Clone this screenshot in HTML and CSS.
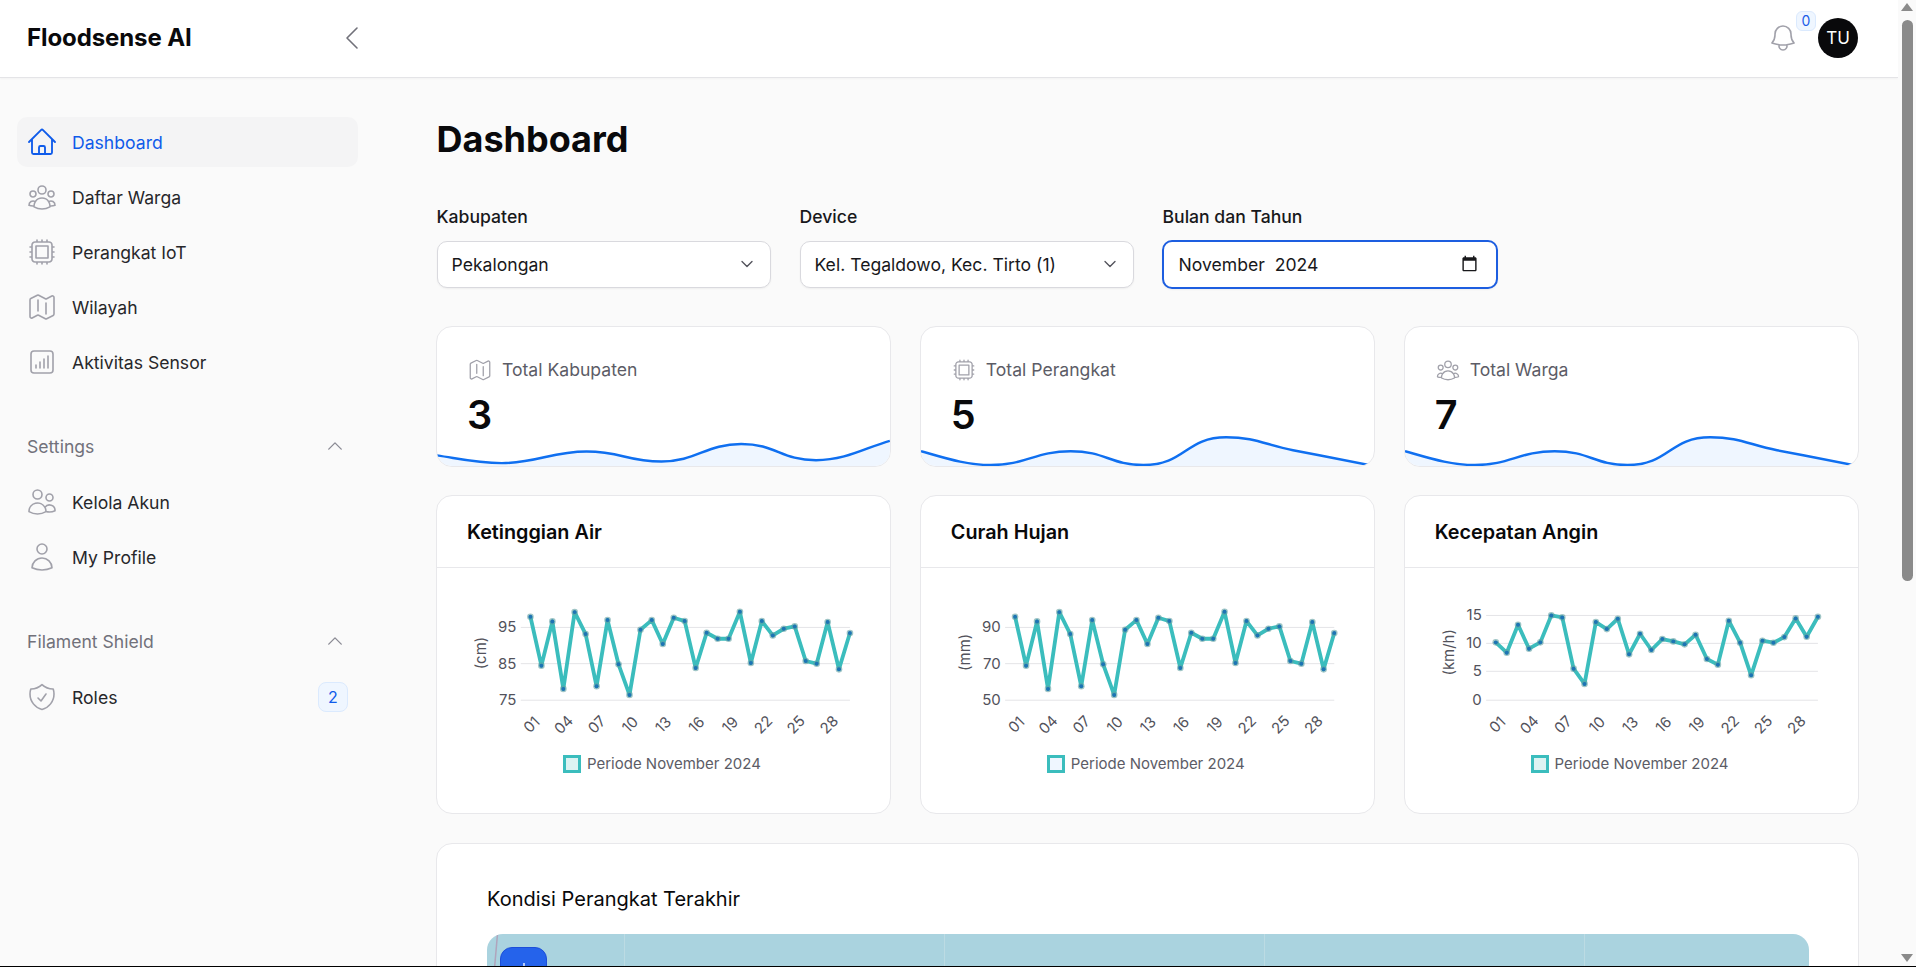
FILE: index.html
```html
<!DOCTYPE html>
<html lang="id">
<head>
<meta charset="utf-8">
<title>Floodsense AI</title>
<link rel="stylesheet" href="styles.css">
</head>
<body>
<svg class="defs" width="0" height="0">
  <defs>
    <symbol id="i-home" viewBox="0 0 24 24"><path d="m2.25 12 8.954-8.955c.44-.439 1.152-.439 1.591 0L21.75 12M4.5 9.75v10.125c0 .621.504 1.125 1.125 1.125H9.75v-4.875c0-.621.504-1.125 1.125-1.125h2.25c.621 0 1.125.504 1.125 1.125V21h4.125c.621 0 1.125-.504 1.125-1.125V9.75M8.25 21h8.25"/></symbol>
    <symbol id="i-group" viewBox="0 0 24 24"><path d="M18 18.72a9.094 9.094 0 0 0 3.741-.479 3 3 0 0 0-4.682-2.72m.94 3.198.001.031c0 .225-.012.447-.037.666A11.944 11.944 0 0 1 12 21c-2.17 0-4.207-.576-5.963-1.584A6.062 6.062 0 0 1 6 18.719m12 0a5.971 5.971 0 0 0-.941-3.197m0 0A5.995 5.995 0 0 0 12 12.75a5.995 5.995 0 0 0-5.058 2.772m0 0a3 3 0 0 0-4.681 2.72 8.986 8.986 0 0 0 3.74.477m.94-3.197a5.971 5.971 0 0 0-.94 3.197M15 6.75a3 3 0 1 1-6 0 3 3 0 0 1 6 0Zm6 3a2.25 2.25 0 1 1-4.5 0 2.25 2.25 0 0 1 4.5 0Zm-13.5 0a2.25 2.25 0 1 1-4.5 0 2.25 2.25 0 0 1 4.5 0Z"/></symbol>
    <symbol id="i-chip" viewBox="0 0 24 24"><path d="M8.25 3v1.5M4.5 8.25H3m18 0h-1.5M4.5 12H3m18 0h-1.5m-15 3.75H3m18 0h-1.5M8.25 19.5V21M12 3v1.5m0 15V21m3.75-18v1.5m0 15V21m-9-1.5h10.5a2.25 2.25 0 0 0 2.25-2.25V6.75a2.25 2.25 0 0 0-2.25-2.25H6.75A2.25 2.25 0 0 0 4.5 6.75v10.5a2.25 2.25 0 0 0 2.25 2.25Zm.75-12h9v9h-9v-9Z"/></symbol>
    <symbol id="i-map" viewBox="0 0 24 24"><path d="M9 6.75V15m6-6v8.25m.503 3.498 4.875-2.437c.381-.19.622-.58.622-1.006V4.82c0-.836-.88-1.38-1.628-1.006l-3.869 1.934c-.317.159-.69.159-1.006 0L9.503 3.252a1.125 1.125 0 0 0-1.006 0L3.622 5.689C3.24 5.88 3 6.27 3 6.695V19.18c0 .836.88 1.38 1.628 1.006l3.869-1.934c.317-.159.69-.159 1.006 0l4.994 2.497c.317.158.69.158 1.006 0Z"/></symbol>
    <symbol id="i-bars" viewBox="0 0 24 24"><path d="M7.5 14.25v2.25m3-4.5v4.5m3-6.75v6.75m3-9v9M6 20.25h12A2.25 2.25 0 0 0 20.25 18V6A2.25 2.25 0 0 0 18 3.75H6A2.25 2.25 0 0 0 3.75 6v12A2.25 2.25 0 0 0 6 20.25Z"/></symbol>
    <symbol id="i-users" viewBox="0 0 24 24"><path d="M15 19.128a9.38 9.38 0 0 0 2.625.372 9.337 9.337 0 0 0 4.121-.952 4.125 4.125 0 0 0-7.533-2.493M15 19.128v-.003c0-1.113-.285-2.16-.786-3.07M15 19.128v.106A12.318 12.318 0 0 1 8.624 21c-2.331 0-4.512-.645-6.374-1.766l-.001-.109a6.375 6.375 0 0 1 11.964-3.07M12 6.375a3.375 3.375 0 1 1-6.75 0 3.375 3.375 0 0 1 6.75 0Zm8.25 2.25a2.625 2.625 0 1 1-5.25 0 2.625 2.625 0 0 1 5.25 0Z"/></symbol>
    <symbol id="i-user" viewBox="0 0 24 24"><path d="M15.75 6a3.75 3.75 0 1 1-7.5 0 3.75 3.75 0 0 1 7.5 0ZM4.501 20.118a7.5 7.5 0 0 1 14.998 0A17.933 17.933 0 0 1 12 21.75c-2.676 0-5.216-.584-7.499-1.632Z"/></symbol>
    <symbol id="i-shield" viewBox="0 0 24 24"><path d="M9 12.75 11.25 15 15 9.75m-3-7.036A11.959 11.959 0 0 1 3.598 6 11.99 11.99 0 0 0 3 9.749c0 5.592 3.824 10.29 9 11.623 5.176-1.332 9-6.03 9-11.622 0-1.31-.21-2.571-.598-3.751h-.152c-3.196 0-6.1-1.248-8.25-3.286Z"/></symbol>
    <symbol id="i-bell" viewBox="0 0 24 24"><path d="M14.857 17.082a23.848 23.848 0 0 0 5.454-1.31A8.967 8.967 0 0 1 18 9.75V9A6 6 0 0 0 6 9v.75a8.967 8.967 0 0 1-2.312 6.022c1.733.64 3.56 1.085 5.455 1.31m5.714 0a24.255 24.255 0 0 1-5.714 0m5.714 0a3 3 0 1 1-5.714 0"/></symbol>
    <symbol id="i-up" viewBox="0 0 24 24"><path d="m4.5 15.75 7.5-7.5 7.5 7.5"/></symbol>
    <symbol id="i-down" viewBox="0 0 24 24"><path d="m19.5 8.25-7.5 7.5-7.5-7.5"/></symbol>
    <symbol id="i-left" viewBox="0 0 24 24"><path d="M15.75 19.5 8.25 12l7.5-7.5"/></symbol>
    <marker id="dot" markerUnits="userSpaceOnUse" viewBox="-12 -12 24 24" markerWidth="24" markerHeight="24" refX="0" refY="0">
      <circle r="10" fill="#5f9ea0" fill-opacity=".6"/>
      <circle r="6" fill="#1d74b4"/>
    </marker>
  </defs>
</svg>

<div class="page">
  <div class="app">
    <header class="topbar">
      <div class="brand">
        <span class="logo">Floodsense AI</span>
        <svg class="ico ico-32 ico-collapse"><use href="#i-left"/></svg>
      </div>
      <div class="top-actions">
        <div class="bell">
          <svg class="ico ico-32"><use href="#i-bell"/></svg>
          <span class="bell-badge">0</span>
        </div>
        <div class="avatar">TU</div>
      </div>
    </header>

    <div class="body-row">
      <aside class="sidebar">
        <nav class="nav-list">
          <a class="nav-item active"><svg class="ico ico-32"><use href="#i-home"/></svg><span>Dashboard</span></a>
          <a class="nav-item"><svg class="ico ico-32"><use href="#i-group"/></svg><span>Daftar Warga</span></a>
          <a class="nav-item"><svg class="ico ico-32"><use href="#i-chip"/></svg><span>Perangkat IoT</span></a>
          <a class="nav-item"><svg class="ico ico-32"><use href="#i-map"/></svg><span>Wilayah</span></a>
          <a class="nav-item"><svg class="ico ico-32"><use href="#i-bars"/></svg><span>Aktivitas Sensor</span></a>
        </nav>
        <div class="nav-group">
          <div class="group-label"><span>Settings</span><svg class="ico ico-chev"><use href="#i-up"/></svg></div>
          <nav class="nav-list">
            <a class="nav-item"><svg class="ico ico-32"><use href="#i-users"/></svg><span>Kelola Akun</span></a>
            <a class="nav-item"><svg class="ico ico-32"><use href="#i-user"/></svg><span>My Profile</span></a>
          </nav>
        </div>
        <div class="nav-group">
          <div class="group-label"><span>Filament Shield</span><svg class="ico ico-chev"><use href="#i-up"/></svg></div>
          <nav class="nav-list">
            <a class="nav-item"><svg class="ico ico-32"><use href="#i-shield"/></svg><span>Roles</span><b class="count">2</b></a>
          </nav>
        </div>
      </aside>

      <main class="main">
        <h1 class="title">Dashboard</h1>

        <section class="filters">
          <div class="field">
            <label class="field-label" for="f-kab">Kabupaten</label>
            <div class="control-wrap">
              <select id="f-kab" class="control"><option>Pekalongan</option></select>
              <svg class="ico select-chev"><use href="#i-down"/></svg>
            </div>
          </div>
          <div class="field">
            <label class="field-label" for="f-dev">Device</label>
            <div class="control-wrap">
              <select id="f-dev" class="control"><option>Kel. Tegaldowo, Kec. Tirto (1)</option></select>
              <svg class="ico select-chev"><use href="#i-down"/></svg>
            </div>
          </div>
          <div class="field">
            <label class="field-label" for="f-date">Bulan dan Tahun</label>
            <div class="control-wrap">
              <input id="f-date" class="control control-focus" type="text" value="November  2024">
              <svg class="date-icon" viewBox="0 0 24 24"><path d="M20 3h-1V1h-2v2H7V1H5v2H4c-1.1 0-2 .9-2 2v16c0 1.1.9 2 2 2h16c1.1 0 2-.9 2-2V5c0-1.1-.9-2-2-2zm0 18H4V8h16v13z"/></svg>
            </div>
          </div>
        </section>

        <section class="grid3 stats">
          <article class="card stat">
            <div class="stat-head"><svg class="ico ico-26"><use href="#i-map"/></svg><span>Total Kabupaten</span></div>
            <div class="stat-value">3</div>
            <svg class="spark" viewBox="0 0 454 32" preserveAspectRatio="none">
              <path class="spark-fill" d="M0 21C25 25 40 29 65 29C100 29 115 17 150 17C185 17 190 27.3 225 27.3C260 27.3 270 9.3 305 9.3C340 9.3 345 26 380 26C410 26 430 13 454 6V32H0Z"/>
              <path class="spark-line" d="M0 21C25 25 40 29 65 29C100 29 115 17 150 17C185 17 190 27.3 225 27.3C260 27.3 270 9.3 305 9.3C340 9.3 345 26 380 26C410 26 430 13 454 6"/>
            </svg>
          </article>
          <article class="card stat">
            <div class="stat-head"><svg class="ico ico-26"><use href="#i-chip"/></svg><span>Total Perangkat</span></div>
            <div class="stat-value">5</div>
            <svg class="spark" viewBox="0 0 454 32" preserveAspectRatio="none">
              <path class="spark-fill" d="M0 16.7C25 24 45 31 70 31C105 31 115 16.7 150 16.7C185 16.7 190 31 223 31C265 31 265 2.3 306 2.3C335 2.3 345 10 373 15.7C400 21 425 26 454 32H0Z"/>
              <path class="spark-line" d="M0 16.7C25 24 45 31 70 31C105 31 115 16.7 150 16.7C185 16.7 190 31 223 31C265 31 265 2.3 306 2.3C335 2.3 345 10 373 15.7C400 21 425 26 454 32"/>
            </svg>
          </article>
          <article class="card stat">
            <div class="stat-head"><svg class="ico ico-26"><use href="#i-group"/></svg><span>Total Warga</span></div>
            <div class="stat-value">7</div>
            <svg class="spark" viewBox="0 0 454 32" preserveAspectRatio="none">
              <path class="spark-fill" d="M0 16.7C25 24 45 31 70 31C105 31 115 16.7 150 16.7C185 16.7 190 31 223 31C265 31 265 2.3 306 2.3C335 2.3 345 10 373 15.7C400 21 425 26 454 32H0Z"/>
              <path class="spark-line" d="M0 16.7C25 24 45 31 70 31C105 31 115 16.7 150 16.7C185 16.7 190 31 223 31C265 31 265 2.3 306 2.3C335 2.3 345 10 373 15.7C400 21 425 26 454 32"/>
            </svg>
          </article>
        </section>

        <section class="grid3 charts">
          <article class="card chart-card">
            <h2 class="chart-title">Ketinggian Air</h2>
            <div class="chart-body">
              <svg class="chart" viewBox="21 -63 1362 543">
                <g class="grid"><path d="M273 115H1263M273 224H1263M273 334H1263"/></g>
                <g class="y-ticks">
                  <text x="260" y="115">95</text><text x="260" y="224">85</text><text x="260" y="334">75</text>
                </g>
                <text class="axis-title" transform="translate(153 192) rotate(-90)">(cm)</text>
                <g class="x-ticks">
                  <text transform="translate(306 408) rotate(-45)">01</text>
                  <text transform="translate(402 408) rotate(-45)">04</text>
                  <text transform="translate(502 408) rotate(-45)">07</text>
                  <text transform="translate(602 408) rotate(-45)">10</text>
                  <text transform="translate(702 408) rotate(-45)">13</text>
                  <text transform="translate(802 408) rotate(-45)">16</text>
                  <text transform="translate(903 408) rotate(-45)">19</text>
                  <text transform="translate(1003 408) rotate(-45)">22</text>
                  <text transform="translate(1101 408) rotate(-45)">25</text>
                  <text transform="translate(1201 408) rotate(-45)">28</text>
                </g>
                <polyline class="series" points="302,83 335,230 368,97 401,300 435,69 468,135 501,292 534,93 567,226 600,318 633,122 667,93 700,165 733,86 766,96 799,237 832,131 865,149 898,149 932,68 965,222 998,96 1031,139 1064,119 1097,112 1130,216 1163,224 1196,99 1230,241 1263,132"/>
              </svg>
              <div class="legend"><i class="swatch"></i><span>Periode November 2024</span></div>
            </div>
          </article>
          <article class="card chart-card">
            <h2 class="chart-title">Curah Hujan</h2>
            <div class="chart-body">
              <svg class="chart" viewBox="3 -63 1362 543">
                <g class="grid"><path d="M256 115H1246M256 224H1246M256 334H1246"/></g>
                <g class="y-ticks">
                  <text x="243" y="115">90</text><text x="243" y="224">70</text><text x="243" y="334">50</text>
                </g>
                <text class="axis-title" transform="translate(135 190) rotate(-90)">(mm)</text>
                <g class="x-ticks">
                  <text transform="translate(290 408) rotate(-45)">01</text>
                  <text transform="translate(386 408) rotate(-45)">04</text>
                  <text transform="translate(486 408) rotate(-45)">07</text>
                  <text transform="translate(586 408) rotate(-45)">10</text>
                  <text transform="translate(686 408) rotate(-45)">13</text>
                  <text transform="translate(786 408) rotate(-45)">16</text>
                  <text transform="translate(887 408) rotate(-45)">19</text>
                  <text transform="translate(984 408) rotate(-45)">22</text>
                  <text transform="translate(1085 408) rotate(-45)">25</text>
                  <text transform="translate(1184 408) rotate(-45)">28</text>
                </g>
                <polyline class="series" points="286,83 319,230 352,97 385,300 419,69 452,135 485,292 518,93 551,226 584,318 617,122 651,93 684,165 717,86 750,96 783,237 816,131 849,149 882,149 916,68 949,222 982,96 1015,139 1048,119 1081,112 1114,216 1147,224 1180,99 1214,241 1246,132"/>
              </svg>
              <div class="legend"><i class="swatch swatch-blue"></i><span>Periode November 2024</span></div>
            </div>
          </article>
          <article class="card chart-card">
            <h2 class="chart-title">Kecepatan Angin</h2>
            <div class="chart-body">
              <svg class="chart" viewBox="12 -63 1362 543">
                <g class="grid"><path d="M256 79H1254M256 163H1254M256 247H1254M256 334H1254"/></g>
                <g class="y-ticks">
                  <text x="243" y="79">15</text><text x="243" y="163">10</text><text x="243" y="247">5</text><text x="243" y="334">0</text>
                </g>
                <text class="axis-title" transform="translate(145 190) rotate(-90)">(km/h)</text>
                <g class="x-ticks">
                  <text transform="translate(290 408) rotate(-45)">01</text>
                  <text transform="translate(386 408) rotate(-45)">04</text>
                  <text transform="translate(488 408) rotate(-45)">07</text>
                  <text transform="translate(590 408) rotate(-45)">10</text>
                  <text transform="translate(690 408) rotate(-45)">13</text>
                  <text transform="translate(790 408) rotate(-45)">16</text>
                  <text transform="translate(890 408) rotate(-45)">19</text>
                  <text transform="translate(990 408) rotate(-45)">22</text>
                  <text transform="translate(1090 408) rotate(-45)">25</text>
                  <text transform="translate(1190 408) rotate(-45)">28</text>
                </g>
                <polyline class="series" points="285,160 318,191 352,107 385,179 419,160 452,79 485,85 519,239 552,285 586,99 619,120 652,89 686,196 719,134 753,183 786,150 819,157 853,166 886,137 920,210 953,227 986,95 1020,161 1053,259 1087,155 1120,161 1153,144 1187,88 1220,143 1254,83"/>
              </svg>
              <div class="legend"><i class="swatch"></i><span>Periode November 2024</span></div>
            </div>
          </article>
        </section>

        <section class="card map-card">
          <h2 class="map-title">Kondisi Perangkat Terakhir</h2>
          <div class="map">
            <svg class="map-border" width="6" height="40" viewBox="0 0 6 40"><path d="M4.5 0 1 40"/></svg>
            <button class="zoom-btn" aria-label="Zoom in"><svg width="18" height="18" viewBox="0 0 18 18"><path d="M9 1V17M1 9H17"/></svg></button>
          </div>
        </section>
      </main>
    </div>
  </div>

  <div class="scrollbar">
    <span class="sb-up"></span>
    <span class="sb-thumb"></span>
    <span class="sb-down"></span>
  </div>
</div>
</body>
</html>
```

FILE: styles.css
```css
* { box-sizing: border-box; }
html, body { margin: 0; height: 100%; overflow: hidden; }
body {
  font-family: Inter, "Liberation Sans", sans-serif;
  font-size: 16px;
  color: #18181b;
  background: #fafafa;
}
.defs { position: absolute; }

.page {
  height: 967px;
  display: flex;
  border-bottom: 1px solid #000;
  overflow: hidden;
}
.app { flex: 1; min-width: 0; display: flex; flex-direction: column; }

/* scrollbar */
.scrollbar {
  width: 18px;
  flex: none;
  display: flex;
  flex-direction: column;
  align-items: center;
  background: #fafafa;
  padding: 3px 0 4px 0;
}
.sb-up, .sb-down {
  width: 0; height: 0;
  border-left: 6px solid transparent;
  border-right: 6px solid transparent;
}
.sb-up { border-bottom: 8px solid #8a8a8a; }
.sb-down { border-top: 8px solid #8a8a8a; margin-top: auto; }
.sb-thumb {
  width: 11px;
  height: 561px;
  margin-top: 9px;
  background: #8a8a8a;
  border-radius: 6px;
}

/* top bar */
.topbar {
  height: 78px;
  flex: none;
  background: #fff;
  border-bottom: 1px solid #e4e4e7;
  box-shadow: 0 1px 2px rgba(0,0,0,.03);
  display: flex;
  align-items: center;
  justify-content: space-between;
  padding: 0 40px 2px 27px;
}
.brand { width: 341px; display: flex; align-items: center; justify-content: space-between; }
.logo { font-size: 24px; font-weight: 700; line-height: 32px; color: #09090b; letter-spacing: -.1px; }
.ico { display: block; fill: none; stroke: #a1a1aa; stroke-width: 1.2; stroke-linecap: round; stroke-linejoin: round; flex: none; }
.ico-32 { width: 32px; height: 32px; }
.ico-26 { width: 26px; height: 26px; stroke-width: 1.2; }
.ico-collapse { stroke: #71717a; }
.top-actions { display: flex; align-items: center; }
.bell { position: relative; width: 51px; height: 32px; }
.bell-badge {
  position: absolute; left: 29px; top: -11px;
  width: 20px; height: 20px;
  display: flex; align-items: center; justify-content: center;
  font-size: 14px; color: #1d5ee8;
  background: #eff6ff; border: 1px solid #dbeafe; border-radius: 6px;
}
.avatar {
  width: 40px; height: 40px; border-radius: 50%;
  background: #09090b; color: #fff;
  display: flex; align-items: center; justify-content: center;
  font-size: 17px;
}

/* body layout */
.body-row { flex: 1; min-height: 0; display: flex; }
.sidebar { width: 375px; flex: none; padding: 39px 0 0 17px; }
.nav-list { display: flex; flex-direction: column; gap: 5px; width: 341px; }
.nav-item {
  height: 50px;
  display: flex; align-items: center; gap: 14px;
  padding: 0 10px 0 9px;
  border-radius: 10px;
  font-size: 17.6px; font-weight: 400;
  color: #27272a;
}
.nav-item .count { margin-left: auto; }
.nav-item.active { background: #f4f4f5; color: #0f5bea; }
.nav-item.active .ico { stroke: #0f5bea; stroke-width: 1.4; }
.nav-group { margin-top: 47px; }
.group-label {
  height: 24px; width: 341px;
  display: flex; align-items: center; justify-content: space-between;
  padding: 0 4px 0 10px;
  font-size: 17.6px; font-weight: 400; color: #71717a;
  margin-bottom: 19px;
}
.ico-chev { width: 20px; height: 20px; stroke: #8a8a94; margin-right: 9px; stroke-width: 1.6; }
.count {
  width: 30px; height: 30px;
  display: flex; align-items: center; justify-content: center;
  font-size: 16px; font-weight: 400; color: #0f5bea;
  background: #eff6ff; border: 1px solid #dbeafe; border-radius: 8px;
}

.main { flex: 1; min-width: 0; padding: 41px 39.5px 0 61px; }
.title { margin: 0 0 0 .5px; font-size: 36px; line-height: 40px; font-weight: 700; color: #09090b; }

.filters { display: flex; gap: 29px; margin-top: 46px; padding: 0 362px 0 .5px; }
.field { flex: 1; min-width: 0; }
.field-label { display: block; font-size: 17.6px; line-height: 24px; font-weight: 500; color: #18181b; margin-bottom: 12px; }
.control-wrap { position: relative; }
.control {
  width: 100%; height: 47px;
  appearance: none;
  font: 400 17.6px Inter, "Liberation Sans", sans-serif;
  color: #18181b;
  background: #fff;
  border: 1px solid #d9d9de;
  border-radius: 10px;
  padding: 0 14px;
  box-shadow: 0 1px 2px rgba(0,0,0,.05);
  outline: none;
  display: block;
}
.control-focus { border: 2px solid #1d5ee0; padding: 0 44px 0 15px; margin: -1px; width: calc(100% + 2px); height: 49px; }
.select-chev { position: absolute; right: 16px; top: 15px; width: 16px; height: 16px; stroke: #52525b; stroke-width: 2; pointer-events: none; }
.date-icon { position: absolute; right: 19px; top: 15px; width: 17px; height: 17px; fill: #18181b; pointer-events: none; }

.grid3 { display: grid; grid-template-columns: repeat(3, 1fr); gap: 29px; }
.stats { margin-top: 38px; }
.charts { margin-top: 28px; }
.card { background: #fff; border: 1px solid #e8e8eb; border-radius: 16px; overflow: hidden; }

.stat { height: 141px; display: flex; flex-direction: column; padding-top: 30px; }
.stat-head { display: flex; align-items: center; gap: 9px; padding-left: 30px; font-size: 17.6px; line-height: 24px; font-weight: 400; color: #5c5c66; height: 26px; }
.stat-value { font-size: 39.6px; line-height: 40px; font-weight: 600; color: #09090b; padding-left: 30px; margin-top: 12px; }
.spark { display: block; width: 100%; height: 32px; margin-top: auto; }
.spark-fill { fill: #eff6ff; stroke: none; }
.spark-line { fill: none; stroke: #0f6ff0; stroke-width: 2.5; }

.chart-card { height: 319px; }
.chart-title {
  margin: 0; height: 72px;
  display: flex; align-items: center;
  padding-left: 30px;
  font-size: 19.8px; font-weight: 600; color: #09090b;
  border-bottom: 1px solid #e8e8eb;
}
.chart-body { display: flex; flex-direction: column; }
.chart { display: block; width: 100%; height: 181px; }
.grid path { stroke: #e4e4e7; stroke-width: 3; fill: none; }
.chart text { font-family: Inter, "Liberation Sans", sans-serif; font-size: 45px; fill: #52525b; }
.y-ticks text { text-anchor: end; dominant-baseline: central; }
.x-ticks text { text-anchor: middle; dominant-baseline: central; }
.axis-title { text-anchor: middle; dominant-baseline: central; }
.series {
  fill: none; stroke: #3bbdbd; stroke-width: 11.5; stroke-linejoin: round;
  marker-start: url(#dot); marker-mid: url(#dot); marker-end: url(#dot);
}
.legend {
  display: flex; align-items: center; justify-content: center; gap: 6px;
  margin-top: 6px; padding-right: 3px;
  font-size: 15px; line-height: 18px; color: #5c5c66;
}
.swatch { width: 18px; height: 18px; border: 3px solid #3bbdbd; background: #dcf3f2; flex: none; }
.swatch-blue { background: #eff6ff; }

.map-card { margin-top: 29px; padding: 41px 49px 0 50px; height: 300px; }
.map-title { margin: 0 0 21px; font-size: 20px; line-height: 28px; font-weight: 400; color: #09090b; }
.map {
  position: relative;
  height: 220px;
  border-radius: 16px;
  overflow: hidden;
  background: linear-gradient(90deg, #bcdbe3 1px, transparent 1px) 137px 0 / 320px 100% #aad3df;
}
.map-border { position: absolute; left: 6px; top: 0; fill: none; stroke: #b0a4bc; stroke-width: 1.5; }
.zoom-btn {
  position: absolute; left: 13px; top: 13px;
  width: 47px; height: 47px; padding: 0;
  display: flex; align-items: center; justify-content: center;
  background: #2563eb; border: 1px solid #1d4ed8; border-radius: 12px;
}
.zoom-btn path { stroke: #dbe7ff; stroke-width: 1.6; fill: none; }
```
